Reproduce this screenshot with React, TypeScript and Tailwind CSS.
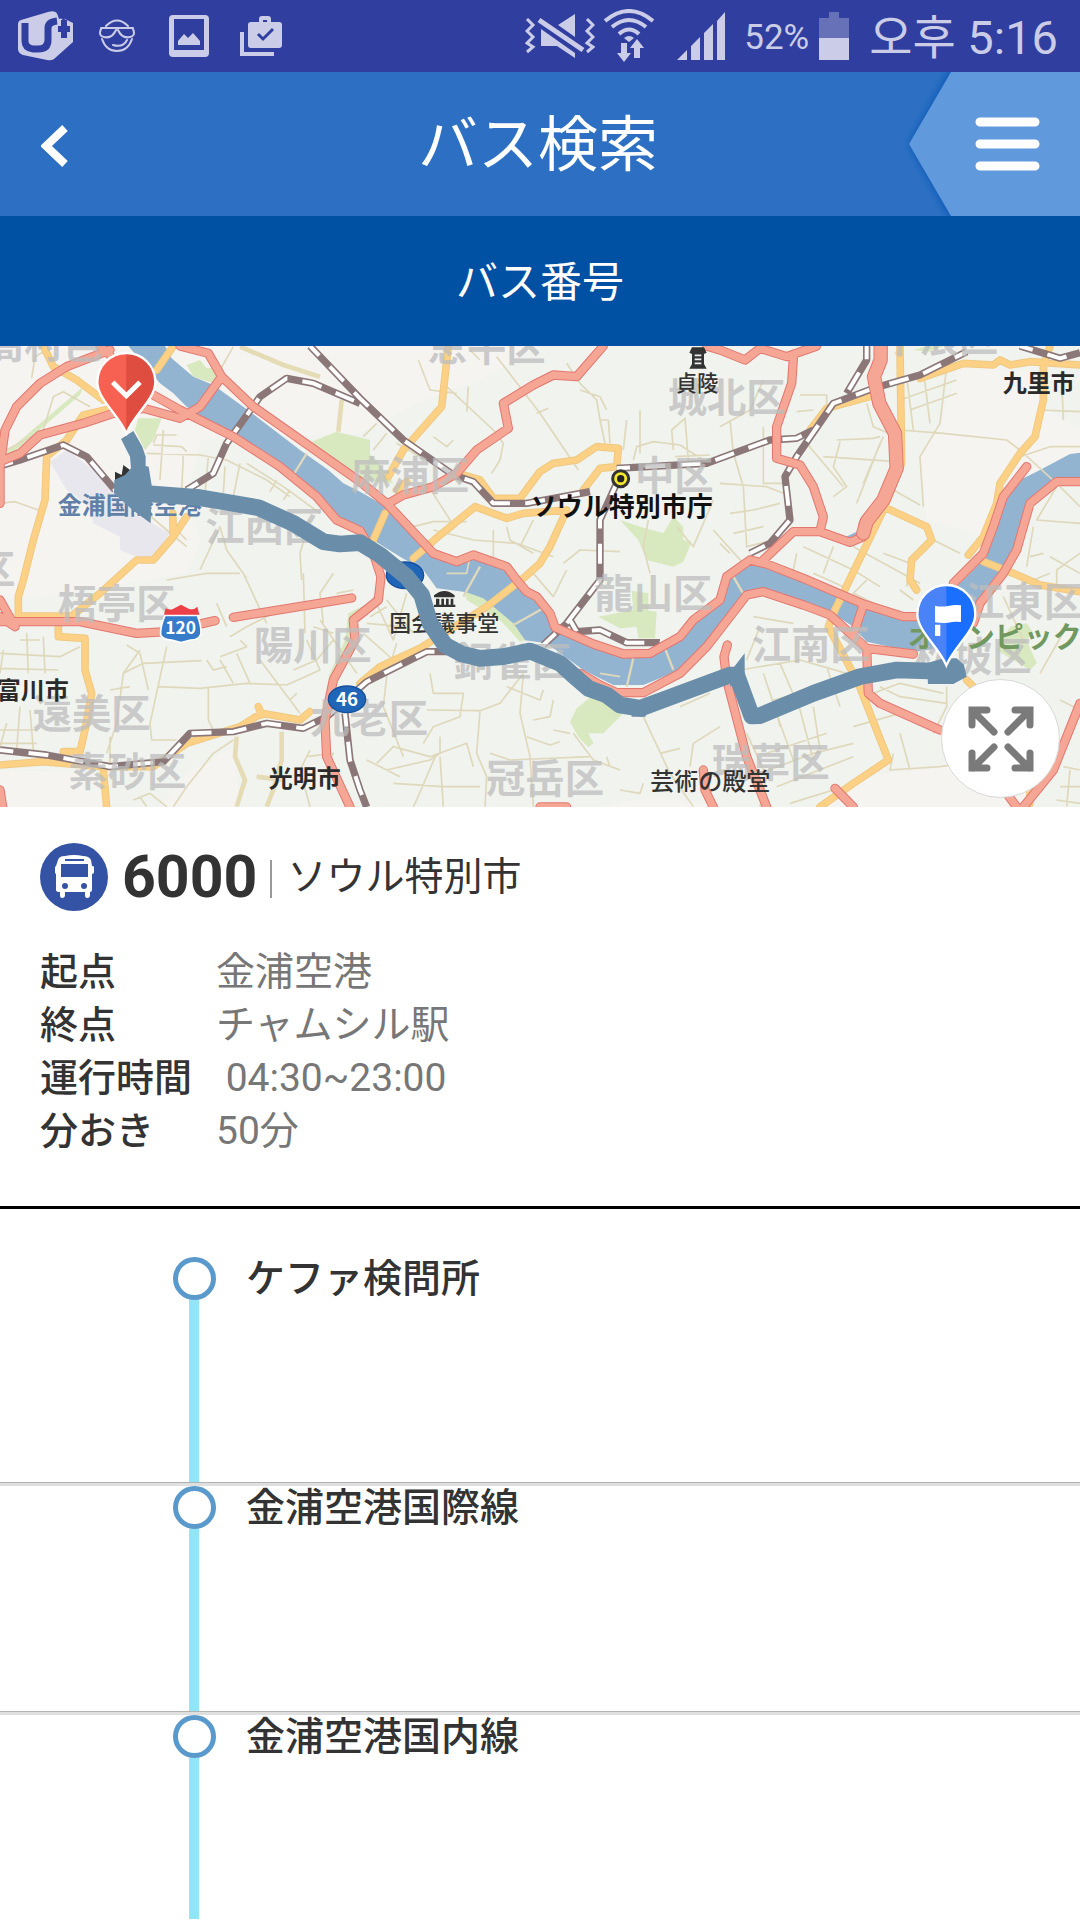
const tripDetails = [
	{ label: '起点', value: '金浦空港' },
	{ label: '終点', value: 'チャムシル駅' },
	{ label: '運行時間', value: '\u00a004:30~23:00' },
	{ label: '分おき', value: '50分' },
];

const stops = ['ケファ検問所', '金浦空港国際線', '金浦空港国内線'];

const greenAreas = [
	'M20,335 L250,140 L240,165 L60,320 L20,350Z',
	'M415,235 L485,235 L460,300 L435,330 L405,270Z',
	'M560,75 L600,60 L620,85 L670,80 L640,130 L580,110Z',
	'M935,305 L1010,275 L1110,300 L1110,400 L1060,395Z',
	'M1080,320 L1130,360 L1180,430 L1080,420Z',
	'M1860,540 L1920,560 L1990,580 L2020,530 L2050,560 L2050,600 L2075,605 L2050,665 L2020,680 L1940,660 L1915,600Z',
	'M1795,830 L1900,810 L1895,752 L1945,760 L1945,812 L1970,815 L1965,895 L1915,895 L1910,860 L1860,865Z',
	'M1710,1145 L1730,1105 L1780,1065 L1880,1110 L1850,1140 L1810,1180 L1765,1180 L1780,1210 L1765,1222 L1735,1190Z',
	'M3030,860 L3080,850 L3100,880 L3080,900 L3110,970 L3090,990 L3040,960 L2990,930Z',
	'M2740,30 L2780,18 L2830,18 L2790,35Z',
	'M1140,710 L1125,780 L1045,820 L1035,900 L985,1010 L1000,1015 L1050,905 L1055,830 L1140,780Z',
];

const minorRoads = [
	'M0,490 L45,485 L115,510',
	'M95,115 L105,50 L140,30',
	'M20,330 L130,270 L160,170 L190,155 L270,200',
	'M440,340 L600,345 L680,360 L800,420 L870,470',
	'M490,270 L480,420 M460,310 L470,285 L530,285 M460,315 L545,320 L560,335',
	'M550,345 L545,450 M625,350 L615,460 M675,380 L670,460 M700,20 L660,90',
	'M740,370 L850,440 L960,520 M830,420 L810,455 M870,450 L850,480 M720,370 L700,470',
	'M600,690 L660,560 L680,630 L740,715 M905,720 L900,640 L930,540',
	'M430,510 L500,570 L560,620 M530,570 L560,600',
	'M1255,60 L1290,150 L1370,160 M1440,60 L1410,30 M1490,50 L1620,220 L1735,390 M1610,220 L1645,205',
	'M1405,140 L1400,215 M1340,140 L1480,270 L1510,310 L1500,360 L1475,400',
	'M1130,250 L1090,290 M1160,280 L1120,330 M1190,310 L1260,350 M1300,290 L1340,320 L1360,300',
	'M1700,70 L1740,130 L1790,180 L1800,240 L1815,310 M1740,150 L1800,170 L1820,210 M1800,240 L1825,240 L1830,310',
	'M1880,240 L1870,330 M1920,210 L1920,340 M1900,360 L1910,320 L1960,305 L2040,315 L2110,360',
	'M2020,330 L2015,270 L2055,235 L2065,360 M2025,350 L2130,345 M1945,540 L1930,620 L1950,700',
	'M1280,430 L1350,540 L1360,570 M1300,570 L1420,600 L1550,610 L1660,650 M1410,650 L1400,700 L1340,700',
	'M1480,570 L1480,650 M1560,620 L1600,540 M1690,670 L1740,630 L1860,635 M1520,560 L1530,600 L1600,640',
	'M1240,560 L1300,545 L1400,545 M2030,560 L2080,620 L2140,480 M2140,570 L2230,670',
	'M2160,260 L2250,210 L2290,120 M2190,240 L2200,340 L2230,440 L2240,620 L2320,600',
	'M2400,165 L2480,165 L2480,200 M2390,215 L2440,210 M2290,260 L2290,430 L2350,430',
	'M2160,430 L2300,440 L2350,460 M2190,520 L2260,510 L2340,490 M2200,580 L2290,560 M2160,610 L2190,640',
	'M2510,300 L2620,295 L2640,290 M2470,350 L2690,365 M2520,305 L2500,380 L2540,440 L2500,470',
	'M2420,310 L2530,440 M2590,430 L2650,290 M2570,490 L2640,310 M2600,190 L2620,260 L2690,290 M2630,110 L2600,180',
	'M2700,180 L2870,120 M2730,210 L2870,160 M2720,110 L2740,270 M2770,90 L2790,250 M2840,80 L2820,250 L2760,350 L2770,500',
	'M2700,270 L2830,280 L3020,300 L3060,330 L3180,440 L3240,500 M3060,350 L3150,320 L3240,320 M3185,120 L3190,240',
	'M3120,210 L3240,215 M3170,440 L3110,540 L3240,550 M3100,560 L3080,680 M3240,640 L3170,690 L3170,740',
	'M2680,450 L2760,495 M2800,600 L2880,640 M2650,640 L2730,670 L2720,740 M2560,620 L2760,730 M2410,620 L2560,690 L2640,740',
	'M2390,640 L2380,690 M2500,620 L2470,700 M3090,650 L3130,640 M3150,650 L3240,700 M3050,740 L3150,700',
	'M0,940 L180,950 L240,920 M0,985 L175,990 M60,900 L120,900 M80,880 L85,1000 M130,890 L135,1000 M10,930 L0,1000',
	'M500,920 L450,1150 L455,1200 L530,1200 M380,915 L420,940 L445,1050 M370,1000 L430,970 L605,962 M330,1050 L390,1040',
	'M420,930 L370,1000 L350,1150 L320,1240 M475,1040 L600,1045 L740,1030 L860,1035 L960,990 L920,900',
	'M625,1040 L625,1140 L650,1190 M660,950 L740,920 L720,900 M660,960 L700,1030 M710,940 L750,1030 M780,960 L900,1120',
	'M620,960 L640,990 L680,980 M730,700 L800,850 M910,700 L915,880 M690,890 L740,860 L860,800 M500,720 L620,700 L720,700',
	'M940,860 L1000,880 M1010,760 L1060,750 M960,840 L1070,1000 M880,990 L950,960 L1000,900 M870,1080 L890,1060',
	'M1000,700 L960,760 L970,850 M650,790 L680,860 M700,1200 L640,1240 L560,1340 L520,1400 M920,1250 L1000,1240 L960,1330',
	'M930,1230 L900,1290 L930,1400 M400,1380 L450,1360 L500,1400 M420,1370 L440,1400 M20,1150 L0,1220 M60,1100 L50,1230 M90,1110 L100,1230',
	'M0,1170 L110,1170 M0,1210 L110,1210 M330,1190 L330,1280',
	'M1120,770 L1180,900 L1220,760 M1160,780 L1240,880 M1100,850 L1210,860 M1090,880 L1180,960 L1250,960 M1110,830 L1160,800',
	'M1190,910 L1160,1010 L1150,1100 L1210,1250 M1290,1000 L1300,1060 L1390,1060 L1380,1130 L1300,1160 L1270,1210',
	'M1280,1110 L1440,1112 L1500,1090 L1570,1000 M1440,1112 L1430,1240 L1460,1310 L1455,1400 M1520,1040 L1620,1080 L1630,1050',
	'M1570,1000 L1560,1120 L1590,1250 L1600,1400 M1580,1190 L1650,1215 L1680,1205 M1470,1240 L1530,1260 L1770,1250',
	'M1130,1270 L1180,1220 L1290,1250 L1400,1210 L1420,1280 M1160,1290 L1290,1260 L1320,1240 L1320,1190 M1310,1240 L1250,1380 L1240,1400',
	'M1320,1250 L1330,1400 M1180,1330 L1330,1340 L1440,1340 M1100,1260 L1200,1310 M1660,1080 L1650,1130 L1600,1140 M1660,1170 L1710,1180',
	'M1720,1180 L1780,1260 L1860,1290 M1820,1250 L1830,1280 M1930,1130 L2010,1300 L2080,1400 M1980,1240 L2040,1225 M2160,1160 L2080,1210 L2070,1280',
	'M1860,1350 L1920,1360 L1930,1330 M2040,1100 L2130,1060 M1600,700 L1660,770 L1700,690 M1800,1000 L1860,1010',
	'M2280,860 L2240,960 M2260,830 L2380,850 M2220,990 L2400,960 L2540,1000 M2290,1000 L2340,1150 L2380,1260 M2340,970 L2400,1110 L2440,1260',
	'M2480,980 L2520,1100 M2240,1180 L2300,1310 L2280,1400 M2280,1300 L2440,1240 L2560,1210 M2340,1160 L2320,1080 L2400,1060',
	'M2300,1240 L2480,1180 M2440,1100 L2460,1230 M2330,1340 L2560,1250 M2370,1390 L2500,1350 M2560,1160 L2700,1120',
	'M2640,1040 L2700,1070 L2840,1090 M2680,1240 L2670,1290 L2820,1280 L2890,1270 M2620,1060 L2700,1030 L2830,1060',
	'M2700,1180 L2730,1290 M2840,1040 L2840,1100 L2800,1180 M3180,1080 L3240,1110 M3190,1280 L3240,1290 M3180,1340 L3240,1340 M3170,1380 L3240,1390 M3210,1290 L3200,1400',
	'M2600,720 L2560,760 L2620,790 M2700,750 L2740,780 M2440,700 L2530,740 M3010,770 L3070,900 M3200,860 L3120,1000',
];

const broadLanes = [
	'M720,20 L850,75 L960,110',
	'M1025,180 L1015,275',
	'M710,1190 L705,1250 L735,1320 L710,1400',
	'M845,1175 L845,1260 L820,1350 L800,1400',
	'M770,1310 L845,1320',
	'M2700,20 L2690,45',
];

const orangeRoads = [
	'M130,18 L160,80 L230,120 L310,180',
	'M520,18 L470,90',
	'M380,195 L250,225 L200,300 L140,350 L135,480 L100,600 L70,720 L55,770 L55,828 L215,828 L300,760 L410,660 L460,660 L520,590 L518,520',
	'M520,590 L560,530',
	'M175,840 L175,890 L255,895 L255,990 L275,1060 L255,1170 L240,1235 L190,1235',
	'M0,1275 L130,1265 L310,1280 L460,1280 L560,1210 L720,1160 L785,1120 L900,1140 L930,1115',
	'M775,1100 L785,1125 M310,1290 L320,1401',
	'M1345,18 L1325,200 L1210,330 L1165,410',
	'M1220,425 L1190,450 M1390,405 L1440,420 L1480,475 L1560,475 L1620,395 L1660,370 L1730,360 L1790,320 L1855,325 L1850,380 L1800,385 L1750,450',
	'M1240,655 L1305,598 L1425,500 L1520,535 L1570,520 L1700,510 L1650,620 L1620,670 L1570,715 L1460,800 L1260,925 L1140,980 L1080,1030',
	'M1155,520 L1120,600',
	'M2700,18 L2705,370 L2650,510 L2505,810 L2485,860 L2575,1030 L2665,1260 L2560,1330 L2460,1401',
	'M2660,505 L2780,560 L2795,600 L2735,660 L2730,720 L2750,750',
	'M3150,18 L3130,80 L3130,180 L3105,290 L3060,340 L3000,430 L2990,490 L2950,590 L2905,645',
	'M2760,115 L2890,70 L2980,75 L3000,60 L3030,75 L3090,65 L3240,75',
	'M2610,170 L2480,205 L2430,270',
	'M2950,665 L3040,700 L3120,735 L3240,755',
	'M2900,1020 L2940,1060 M3090,1340 L3090,1390',
];

const motorways = [
	'M0,490 L0,380 L15,270 L50,200 L120,130 L200,80 L330,30',
	'M0,365 L60,340 L120,285 L250,250 L340,220 L430,205 L540,235 L600,200 L665,110 L625,40 L540,18',
	'M300,18 L330,45',
	'M460,165 L540,210 L700,290 L840,380 L950,470 L1010,540 L1080,572 L1120,640 L1143,710 L1135,780 L1060,840 L1065,900 L1000,1020 L975,1140 L980,1250 L1050,1401',
	'M665,110 L760,200 L1080,425 L1160,490 L1300,640 L1370,665 L1420,645 L1520,680 L1550,720 L1580,755 L1610,770 L1650,820 L1665,862 L1780,912 L1870,942 L1950,940 L2040,890 L2080,840 L2160,780 L2180,710 L2250,660 L2300,672 L2410,715 L2590,792 L2710,830 L2780,830',
	'M1810,18 L1730,110 L1660,105 L1600,135 L1510,190 L1525,265 L1430,330 L1370,400 L1300,440 L1210,465 L1165,490',
	'M2120,18 L2160,30 L2235,60 L2280,25 L2360,50 L2450,18',
	'M2380,55 L2375,130 L2330,260 L2330,355 L2400,375 L2440,440 L2470,530 L2460,575',
	'M2590,550 L2590,590 L2550,607 L2460,575 L2380,575 L2290,660',
	'M3080,380 L3010,470 L2980,560 L2950,640 L2860,730',
	'M3240,425 L3170,425 L3090,490 L3050,630 L3010,700 L2940,790 L2920,850',
	'M1740,1000 L1800,1035 L1850,1058 L1930,1058 L2040,1000 L2120,920 L2240,765 L2290,755 L2410,795 L2490,825 L2600,925 L2740,942',
	'M2590,795 L2565,870 M2600,925 L2605,1060 L2640,1090 L2820,1170',
	'M2182,915 L2172,950 L2180,1020 L2240,1250 L2300,1401',
	'M3240,1090 L3160,1290 L3070,1401 M3050,1401 L3020,1360',
	'M2505,1345 L2560,1401 M2110,1290 L2115,1350 L2140,1401',
	'M0,780 L45,860 L0,830 M0,845 L240,845 L410,880 L500,875 L645,842',
	'M700,832 L1055,774 M0,1350 L8,1401 M1620,1401 L1700,1401',
];

const railways = [
	'M0,378 L60,360 L190,315 L260,350 L345,450',
	'M560,450 L640,400 L680,310 L780,170 L860,115 L940,130 L1080,190',
	'M930,18 L1080,175 L1210,300 L1360,405 L1420,425 L1480,490 L1580,490 L1770,455',
	'M1850,430 L1800,540 L1800,720 L1700,850 L1630,915',
	'M1710,840 L1730,875 L1800,870 L1880,908 L1980,908',
	'M1850,385 L2120,370 L2160,355 L2310,300 L2390,295 L2440,270',
	'M2600,18 L2600,60 L2540,160',
	'M3060,18 L3180,55 L3240,38',
	'M2900,35 L2760,105 L2620,145 L2500,190 L2390,350 L2355,410 L2370,540 L2310,610 L2250,640',
	'M0,1230 L140,1245 L330,1280 L490,1265 L570,1180 L700,1175 L800,1150 L910,1165 L980,1130 L1100,1025 L1280,935 L1400,935',
	'M1035,1120 L1050,1260 L1080,1350 L1100,1401',
];

const districtLabels = [
	{ name: '高村邑', x: -45, y: 55 },
	{ name: '江西区', x: 616, y: 603 },
	{ name: '恩平区', x: 1283, y: 63 },
	{ name: '麻浦区', x: 1053, y: 450 },
	{ name: '中区', x: 1905, y: 450 },
	{ name: '城北区', x: 2003, y: 215 },
	{ name: '中浪区', x: 2640, y: 35 },
	{ name: '区', x: -72, y: 733 },
	{ name: '梧亭区', x: 173, y: 833 },
	{ name: '陽川区', x: 761, y: 960 },
	{ name: '遠美区', x: 98, y: 1165 },
	{ name: '素砂区', x: 205, y: 1339 },
	{ name: '九老区', x: 930, y: 1180 },
	{ name: '銅雀区', x: 1360, y: 1007 },
	{ name: '冠岳区', x: 1458, y: 1360 },
	{ name: '龍山区', x: 1783, y: 804 },
	{ name: '江南区', x: 2255, y: 958 },
	{ name: '江東区', x: 2895, y: 828 },
	{ name: '松坡区', x: 2741, y: 993 },
	{ name: '瑞草区', x: 2135, y: 1310 },
];

const cityLabels = [
	{ name: '九里市', x: 3008, y: 155 },
	{ name: '富川市', x: -10, y: 1077 },
	{ name: '光明市', x: 806, y: 1342 },
];

const placeLabels = [
	{ name: '貞陵', x: 2027, y: 153, size: 64 },
	{ name: '国会議事堂', x: 1168, y: 874, size: 66 },
	{ name: '芸術の殿堂', x: 1951, y: 1350, size: 72 },
];

function StatusBar() {
	return (
		<div className="flex h-[72px] items-center justify-between bg-[#303f9f] pl-[18px] pr-[22px] text-[#cbcde8]">
			<div className="flex items-center">
				<svg viewBox="18 11 55 50" className="h-[50px] w-[55px]">
					<path
						d="M21,20 L48,12 Q54,10 57,13 L59,19 L63,18 L73,23 V42 L54,59 Q51,61 47,60 L23,55 Q18,53 18,49 V24 Q18,21 21,20Z"
						fill="currentColor"
					/>
					<path
						d="M25,23 V41 Q25,48 33,49 L38,49 Q48,49 48,40 V28 Q48,22 57,21"
						fill="none"
						stroke="#303f9f"
						strokeWidth="7"
					/>
					<path
						d="M64,20 V38 M58,29 H70"
						fill="none"
						stroke="#303f9f"
						strokeWidth="6"
					/>
					<path d="M57,12 L66,22" stroke="#303f9f" strokeWidth="2" />
				</svg>
				<svg
					viewBox="99 20 36 34"
					className="ml-[26px] h-[34px] w-9"
					fill="none"
					stroke="currentColor"
					strokeWidth="2"
					strokeLinecap="round"
				>
					<path d="M106,27 Q117,16 128,27" />
					<path d="M101,29 H133" />
					<path d="M101,30 Q98,37 104,38 Q112,40 116,31 M133,30 Q136,37 130,38 Q122,40 118,31" />
					<path d="M102,40 Q106,52 117,52 Q128,52 132,40" />
					<path d="M113,46 Q123,49 127,41" />
				</svg>
				<svg viewBox="169 15 40 42" className="ml-[34px] h-[42px] w-10">
					<path
						fillRule="evenodd"
						fill="currentColor"
						d="M173,15 H205 Q209,15 209,19 V53 Q209,57 205,57 H173 Q169,57 169,53 V19 Q169,15 173,15Z M174,19 V50 H204 V19Z"
					/>
					<path
						fill="currentColor"
						d="M178,45 V41 L184,34 L188,38 L193,33 L200,41 V45Z"
					/>
				</svg>
				<svg viewBox="240 17 43 41" className="ml-[31px] h-[41px] w-[43px]">
					<path d="M242,33 V55 H274" fill="none" stroke="currentColor" strokeWidth="4" />
					<path
						fillRule="evenodd"
						fill="currentColor"
						d="M251,23 H259 V20 Q259,17 262,17 H268 Q271,17 271,20 V23 H279 Q282,23 282,26 V46 Q282,49 279,49 H251 Q248,49 248,46 V26 Q248,23 251,23Z M263,21 V23 H267 V21Z"
					/>
					<path d="M258,35 L263,40 L273,30" fill="none" stroke="#303f9f" strokeWidth="3" />
				</svg>
			</div>
			<div className="flex items-center">
				<svg viewBox="525 13 70 46" className="h-[46px] w-[70px]">
					<g fill="none" stroke="currentColor" strokeWidth="3">
						<path d="M527,19 L533,25 L527,31 L533,37 L527,43 L533,47 L527,52" />
						<path d="M587,19 L593,25 L587,31 L593,37 L587,43 L593,47 L587,52" />
					</g>
					<path d="M575,14 V37 L558,25Z M541,29 L575,53 V58 L557,46 H541Z" fill="currentColor" />
					<path d="M538,17 L584,51" stroke="#303f9f" strokeWidth="10" />
					<path d="M539,20 L583,50" stroke="currentColor" strokeWidth="5" />
				</svg>
				<svg viewBox="604 9 50 54" className="ml-[9px] h-[54px] w-[50px]">
					<g fill="none" stroke="currentColor" strokeWidth="4">
						<path d="M605,21 Q629,1 653,21" />
						<path d="M612,27 Q629,13 646,27" />
						<path d="M619,34 Q629,25 639,34" />
					</g>
					<path
						fill="currentColor"
						d="M624,38 Q629,34 634,38 L629,42Z M621,43 H627 V53 H631 L624,62 L617,53 H621Z M637,39 L644,48 H640 V58 H634 V48 H630Z"
					/>
				</svg>
				<svg
					viewBox="677 12 48 48"
					className="ml-[23px] size-12"
					fill="currentColor"
				>
					<path d="M677,60 L687,50 V60Z M691,60 V46 L700,37 V60Z M704,60 V33 L713,24 V60Z M717,60 V21 L725,12 V60Z" />
				</svg>
				<span className="ml-[19px] pt-1 font-['Roboto',sans-serif] text-[35px]">
					52%
				</span>
				<svg
					viewBox="819 11 30 48"
					className="ml-[10px] h-12 w-[30px]"
					fill="currentColor"
				>
					<path d="M829,11 H839 V17 H849 V37 H819 V17 H829Z" opacity="0.35" />
					<path d="M819,37 H849 V59 H819Z" />
				</svg>
				<span className="ml-[20px] pt-0.5 font-['Roboto','Noto_Sans_CJK_KR',sans-serif] text-[47px] leading-none">
					오후 5:16
				</span>
			</div>
		</div>
	);
}

function Header() {
	return (
		<header className="flex h-36 items-stretch justify-between bg-[#2d70c3]">
			<button type="button" aria-label="戻る" className="w-[171px] pl-[41px]">
				<svg viewBox="0 0 27 42" className="mt-1 h-[42px] w-[27px]">
					<path
						d="M24,3 L5,21 L24,39"
						fill="none"
						stroke="#fff"
						strokeWidth="8"
					/>
				</svg>
			</button>
			<h1 className="self-center pt-1 text-[60px] leading-none text-white">
				バス検索
			</h1>
			<button type="button" aria-label="メニュー" className="w-[175px]">
				<svg viewBox="905 72 175 144" className="h-36 w-[175px]">
					<defs>
						<filter id="edge" x="-10%" y="-10%" width="120%" height="120%">
							<feGaussianBlur stdDeviation="3" />
						</filter>
					</defs>
					<path
						d="M949,68 L907,144 L949,220 H1090 V68Z"
						fill="#1260ba"
						filter="url(#edge)"
					/>
					<path d="M951,72 L909,144 L951,216 H1080 V72Z" fill="#6199dd" />
					<path
						d="M980,122 H1035 M980,144 H1035 M980,166 H1035"
						stroke="#fff"
						strokeWidth="9"
						strokeLinecap="round"
					/>
				</svg>
			</button>
		</header>
	);
}

function Roads({
	paths,
	casing,
	fill,
	width,
	border = 6,
}: {
	paths: string[];
	casing: string;
	fill: string;
	width: number;
	border?: number;
}) {
	const d = paths.join(' ');
	return (
		<g fill="none" strokeLinecap="round" strokeLinejoin="round">
			<path d={d} stroke={casing} strokeWidth={width + border} />
			<path d={d} stroke={fill} strokeWidth={width} />
		</g>
	);
}

function Pin({
	x,
	y,
	light,
	dark,
	children,
}: {
	x: number;
	y: number;
	light: string;
	dark: string;
	children: React.ReactNode;
}) {
	return (
		<g transform={`translate(${x} ${y})`}>
			<path
				d="M0,154 C-24,96 -87,52 -87,0 A87,87 0 0 1 87,0 C87,52 24,96 0,154Z"
				fill={light}
			/>
			<path d="M0,-87 A87,87 0 0 1 87,0 C87,52 24,96 0,154Z" fill={dark} />
			<path
				d="M0,154 C-24,96 -87,52 -87,0 A87,87 0 0 1 87,0 C87,52 24,96 0,154Z"
				fill="none"
				stroke="#fff"
				strokeWidth="7"
			/>
			{children}
		</g>
	);
}

function RouteMap() {
	return (
		<div className="relative">
			<svg
				viewBox="0 18 3240 1383"
				role="img"
				aria-label="路線図"
				className="block w-full font-['Noto_Sans_CJK_JP',sans-serif]"
			>
				<rect x="0" y="18" width="3240" height="1383" fill="#f0f3ee" />
				<g fill="#f6f4f1">
					<path d="M0,18 H1600 L1480,100 L1250,190 L1080,280 L600,300 L560,480 L600,600 L560,700 L200,760 L0,780Z" />
					<path d="M2880,80 L3090,90 L3130,200 L3240,270 V420 L3000,430 L2950,600 L2900,570 L2780,540 L2760,350 L2820,250Z" />
					<path d="M480,1401 L560,1300 L700,1220 L720,1401Z M0,1290 L300,1300 L320,1401 H0Z" />
					<path d="M2480,1401 L2600,1310 L2900,1270 L3160,1230 L3080,1401Z M1800,1401 L1960,1370 L2200,1401Z" />
				</g>
				<path
					d="M150,365 L200,330 L350,440 L400,520 L510,580 L460,650 L410,650 L360,630 L360,590 L280,550 L270,500 L200,450Z"
					fill="#e8e7ed"
				/>
				<path d={greenAreas.join(' ')} fill="#d8e8bf" />
				<g fill="#92b4d1">
					<path d="M385,18 L495,18 L515,55 L580,110 L640,135 L730,200 L900,330 L985,390 L1030,430 L1080,455 L1160,500 L1300,650 L1370,675 L1420,650 L1520,690 L1560,740 L1610,770 L1650,830 L1665,870 L1780,920 L1870,945 L1950,940 L2040,890 L2080,840 L2160,770 L2190,710 L2250,660 L2410,715 L2590,795 L2710,830 L2780,840 L2860,750 L2960,650 L3000,520 L3040,430 L3120,390 L3210,342 L3240,338 V415 L3170,420 L3095,490 L3050,600 L3010,690 L2940,800 L2860,920 L2740,935 L2600,905 L2560,860 L2490,815 L2410,790 L2290,750 L2240,755 L2120,910 L2040,990 L1930,1035 L1840,1035 L1750,990 L1640,910 L1570,900 L1520,840 L1450,800 L1390,755 L1310,745 L1270,690 L1200,650 L1080,575 L1010,545 L950,480 L830,390 L700,290 L560,200 L520,160 L480,130Z" />
					<path d="M2535,592 L2570,575 L2590,560 L2580,605Z" />
				</g>
				<path
					d="M1395,755 L1450,775 L1540,850 L1575,900 L1560,905 L1500,840 L1400,780Z"
					fill="#d8e8bf"
				/>
				<g fill="none" strokeLinejoin="round" stroke="#dfd8bb">
					<path d={minorRoads.join(' ')} strokeWidth="5" />
					<path
						d="M920,340 L880,405 M1440,680 L1390,770 M1630,805 L1540,855 M1900,955 L1880,1040 M1995,925 L2020,990 M2200,710 L2235,770"
						strokeWidth="7"
					/>
					<path d={broadLanes.join(' ')} strokeWidth="14" stroke="#e5dcb6" />
				</g>
				<Roads paths={orangeRoads} casing="#efc981" fill="#fcd185" width={17} />
				<g fill="none" strokeLinejoin="round">
					<path d={railways.join(' ')} stroke="#8c7778" strokeWidth="22" />
					<path
						d={railways.join(' ')}
						stroke="#fff"
						strokeWidth="12"
						strokeDasharray="60 46"
						strokeDashoffset="20"
					/>
				</g>
				<Roads paths={motorways} casing="#e37770" fill="#f5a694" width={22} />
				<Roads
					paths={[
						'M2642,-10 L2642,60 L2622,110 L2638,190 L2685,280 L2690,385 L2650,480 L2600,545 L2590,580',
					]}
					casing="#e37770"
					fill="#f5a694"
					width={37}
				/>
				<g fill="#bdbdbd" fillOpacity="0.75" fontSize="118" fontWeight="700">
					{districtLabels.map((label) => (
						<text key={label.name} x={label.x} y={label.y}>
							{label.name}
						</text>
					))}
				</g>
				<text x="173" y="521" fontSize="72" fontWeight="700" fill="#6080a8">
					金浦国際空港
				</text>
				<text x="2723" y="924" fontSize="87" fontWeight="700" fill="#71985f">
					オリンピック公園
				</text>
				<g fill="#2a2a2a" fontSize="72" fontWeight="700">
					{cityLabels.map((label) => (
						<text key={label.name} x={label.x} y={label.y}>
							{label.name}
						</text>
					))}
				</g>
				<g fill="#333" fontWeight="500">
					{placeLabels.map((label) => (
						<text
							key={label.name}
							x={label.x}
							y={label.y}
							fontSize={label.size}
						>
							{label.name}
						</text>
					))}
				</g>
				<text x="1592" y="527" fontSize="78" fontWeight="700" fill="#111">
					ソウル特別市庁
				</text>
				{/* landmarks */}
				<circle cx="1862" cy="416" r="24" fill="#f5e62e" stroke="#333" strokeWidth="9" />
				<circle cx="1862" cy="416" r="11" fill="#222" />
				<path
					d="M2068,38 L2076,22 H2112 L2120,38 L2112,42 V72 L2120,86 H2068 L2076,72 V42Z"
					fill="#333"
				/>
				<path d="M2084,46 H2104 M2084,58 H2104 M2084,70 H2104" stroke="#eee" strokeWidth="5" />
				<path
					d="M1302,766 Q1334,740 1364,766 V772 H1302Z M1308,776 H1318 V794 H1308Z M1324,776 H1332 V794 H1324Z M1338,776 H1346 V794 H1338Z M1352,776 H1360 V794 H1352Z M1302,794 H1366 V801 H1302Z"
					fill="#333"
				/>
				<path d="M345,395 L365,405 L370,375 L390,390 L390,425 L345,430Z" fill="#333" />
				{/* highway shields */}
				<g stroke="#fff" strokeWidth="5">
					<path
						d="M495,826 Q480,860 482,885 Q490,900 515,900 L543,908 L572,900 Q598,900 603,880 Q604,855 592,826Z"
						fill="#377bcb"
					/>
					<path
						d="M492,824 L497,805 Q512,812 520,806 L543,794 L566,806 Q580,812 592,800 L598,824Z"
						fill="#ee4048"
						stroke="none"
					/>
				</g>
				<g fill="#1f66b8" stroke="#164f9c" strokeWidth="4">
					<ellipse cx="1215" cy="706" rx="56" ry="40" />
					<ellipse cx="1041" cy="1078" rx="56" ry="40" />
				</g>
				<g fill="#fff" fontWeight="700" textAnchor="middle">
					<text x="542" y="883" fontSize="52">
						120
					</text>
					<text x="1041" y="1097" fontSize="56">
						46
					</text>
				</g>
				{/* bus route */}
				<g fill="#6a8da9">
					<path d="M363,297 L400,273 L427,320 L437,350 L437,378 L446,380 L455,436 L452,550 L400,512 L370,485 L342,460 L343,420 L375,405 L393,385 L390,350Z" />
					<path d="M2195,990 L2234,940 L2234,1010 L2190,1040Z M1895,1090 H1937 V1130 H1895Z" />
					<path d="M2780,970 L2830,955 H2870 L2892,975 L2900,1010 L2860,1032 H2784Z" />
				</g>
				<path
					d="M430,460 L600,473 L775,503 L880,550 L970,605 L1020,612 L1080,608 L1140,645 L1220,710 L1265,765 L1290,850 L1335,915 L1385,942 L1440,955 L1510,950 L1590,933 L1680,970 L1725,1010 L1765,1045 L1820,1065 L1860,1095 L1920,1105 L1980,1083 L2190,1005 L2210,1005 L2255,1128 L2280,1127 L2440,1060 L2580,1010 L2690,990 L2860,995"
					fill="none"
					stroke="#6a8da9"
					strokeWidth="50"
					strokeLinejoin="round"
				/>
				<Pin x={379} y={126} light="#f76151" dark="#de4d40">
					<path
						d="M-41,1 L0,41 L41,1"
						fill="none"
						stroke="#fff"
						strokeWidth="15"
					/>
				</Pin>
				<Pin x={2839} y={822} light="#4a83f7" dark="#1a6fff">
					<path
						d="M-34,-25 Q-18,-20 5,-24 Q26,-29 44,-26 V24 Q26,21 5,26 Q-12,29 -34,25Z M-34,32 H-18 V66 H-34Z"
						fill="#fff"
					/>
				</Pin>
			</svg>
			<button
				type="button"
				aria-label="地図を拡大"
				className="absolute bottom-[9px] right-[20px] flex size-[119px] items-center justify-center rounded-full border border-[#d8d8d8] bg-white"
			>
				<svg
					viewBox="0 0 66 66"
					className="size-[66px]"
					fill="none"
					stroke="#7a7a7a"
					strokeWidth="7"
					strokeLinecap="round"
					strokeLinejoin="miter"
				>
					<path d="M26,26 L5,5 M4,19 V4 H19" />
					<path d="M40,26 L61,5 M47,4 H62 V19" />
					<path d="M26,41 L5,62 M4,47 V62 H19" />
					<path d="M40,41 L61,62 M47,62 H62 V47" />
				</svg>
			</button>
		</div>
	);
}

function BusInfo() {
	return (
		<section className="border-b-3 border-black px-10 pb-[48px] pt-[34px] text-[39px] text-[#333]">
			<div className="flex items-center">
				<svg viewBox="0 0 68 68" className="size-[68px]">
					<circle cx="34" cy="34" r="34" fill="#3553a4" />
					<path
						d="M18,17 Q19,13 25,13 Q34,11 43,13 Q49,13 51,17 L52,23 H53 Q54,23 54,25 V29 Q54,31 52,31 V47 Q52,49 50,49 V52 Q50,55 47,55 Q45,55 45,52 V49 H25 V52 Q25,55 22,55 Q20,55 20,52 V49 Q16,49 16,47 V31 Q15,31 15,29 V25 Q15,23 16,23Z"
						fill="#fff"
					/>
					<path d="M21,21 H48 V34 H21Z M25,16 H44 V18 H25Z" fill="#3553a4" />
					<circle cx="25" cy="43" r="3" fill="#3553a4" />
					<circle cx="44" cy="43" r="3" fill="#3553a4" />
				</svg>
				<strong className="ml-[14px] text-[59px] font-bold leading-[72px]">
					6000
				</strong>
				<span className="ml-[13px] mt-1 h-[38px] w-0.5 bg-[#999]" />
				<span className="ml-[15px] leading-[72px]">ソウル特別市</span>
			</div>
			<dl className="mt-[33px] grid grid-cols-[176px_1fr] leading-[53px]">
				{tripDetails.map((item) => (
					<div key={item.label} className="contents">
						<dt className="text-[38px] font-medium">{item.label}</dt>
						<dd className="text-[#777]">{item.value}</dd>
					</div>
				))}
			</dl>
		</section>
	);
}

function StopList() {
	return (
		<ol className="flex flex-1 flex-col pt-[48px]">
			{stops.map((name) => (
				<li
					key={name}
					className="flex min-h-[200px] gap-[30px] border-b-3 border-[#dfdfdf] pl-[173px] not-last:h-[229px] not-last:shadow-[inset_0_-1px_0_#b3b3b3] last:flex-1 last:border-b-0"
				>
					<div className="flex w-[43px] flex-col">
						<span className="size-[43px] shrink-0 rounded-full border-5 border-[#5a99cc] bg-white" />
						<span className="mb-px ml-4 w-[10px] flex-1 bg-[#90e5f9]" />
					</div>
					<span className="text-[39px] font-medium leading-[44px] text-[#333]">
						{name}
					</span>
				</li>
			))}
		</ol>
	);
}

export default function App() {
	return (
		<div className="flex min-h-screen flex-col bg-white font-['Roboto','Noto_Sans_CJK_JP',sans-serif]">
			<StatusBar />
			<Header />
			<h2 className="bg-[#0050a4] pt-1 text-center text-[42px] leading-[126px] text-white">
				バス番号
			</h2>
			<RouteMap />
			<BusInfo />
			<StopList />
		</div>
	);
}
